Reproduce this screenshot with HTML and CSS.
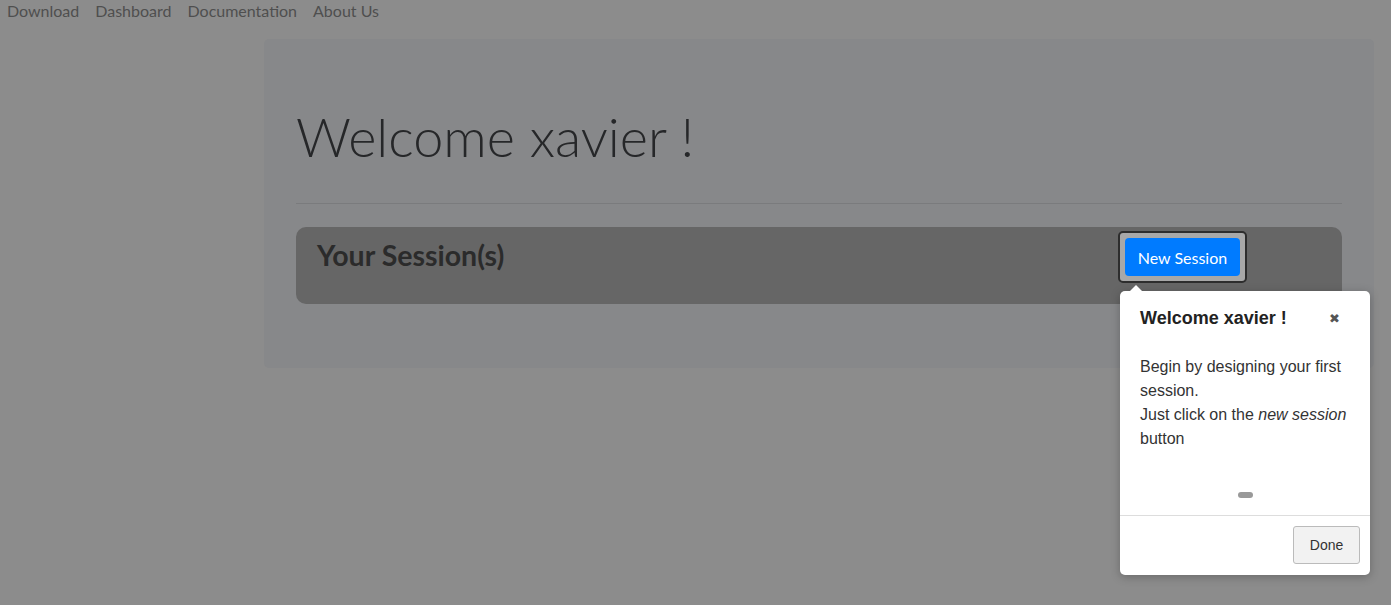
FILE: index.html
```html
<!DOCTYPE html>
<html lang="en">
<head>
<meta charset="utf-8">
<title>Dashboard</title>
<link rel="stylesheet" href="styles.css">
</head>
<body>
<nav class="topnav">
  <a class="nav-link" href="#">Download</a>
  <a class="nav-link" href="#">Dashboard</a>
  <a class="nav-link" href="#">Documentation</a>
  <a class="nav-link" href="#">About Us</a>
</nav>
<main class="container">
  <section class="jumbotron">
    <h1 class="display">Welcome xavier !</h1>
    <hr class="divider">
    <div class="session-card">
      <h3 class="session-title">Your Session(s)</h3>
      <div class="highlight">
        <button class="btn-primary">New Session</button>
      </div>
    </div>
  </section>
</main>
<div class="popover">
  <div class="popover-arrow"></div>
  <div class="popover-header">
    <span class="popover-title">Welcome xavier !</span>
    <span class="popover-close">&#x2716;</span>
  </div>
  <div class="popover-body">
    Begin by designing your first session.<br>
    Just click on the <em>new session</em> button
  </div>
  <div class="popover-dots"><span class="dot"></span></div>
  <div class="popover-footer">
    <button class="btn-done">Done</button>
  </div>
</div>
</body>
</html>
```
FILE: styles.css
```css
html, body {
  margin: 0;
  padding: 0;
}
body {
  background: #8c8c8c;
  font-family: Lato, "Open Sans", sans-serif;
  height: 605px;
  overflow: hidden;
}
.topnav {
  display: flex;
  gap: 16px;
  padding: 0 7px;
  height: 39px;
  align-items: flex-start;
}
.nav-link {
  color: #4f4f4f;
  text-decoration: none;
  font-size: 16px;
  line-height: 22px;
}
.container {
  margin-left: 264px;
  width: 1110px;
}
.jumbotron {
  background: #87888a;
  border-radius: 5px;
  padding: 64px 32px 64px;
}
.display {
  margin: 0;
  font-weight: 300;
  font-size: 54px;
  line-height: 68px;
  color: #262729;
}
.divider {
  margin: 32px 0 23px;
  border: 0;
  border-top: 1px solid #7a7b7d;
}
.session-card {
  background: #666666;
  border-radius: 10px;
  display: flex;
  align-items: flex-start;
  padding: 4px 0 21px 21px;
}
.session-title {
  margin: 7px 0 0;
  font-size: 28.5px;
  font-weight: 700;
  line-height: 34px;
  color: #2b2b2b;
  flex: 0 0 801px;
}
.highlight {
  background: #a8a8a8;
  border: 2px solid #2d2d2d;
  border-radius: 5px;
  padding: 5px;
}
.btn-primary {
  display: block;
  width: 115px;
  height: 38px;
  padding: 0;
  border: 0;
  border-radius: 4px;
  background: #007bff;
  color: #ffffff;
  font-family: Lato, "Open Sans", sans-serif;
  font-size: 16px;
}
.popover {
  position: absolute;
  left: 1120px;
  top: 291px;
  width: 250px;
  height: 284px;
  background: #ffffff;
  border-radius: 5px;
  box-shadow: 0 2px 10px rgba(0,0,0,0.25);
  font-family: "Liberation Sans", Arial, sans-serif;
  color: #333333;
  display: flex;
  flex-direction: column;
}
.popover-arrow {
  position: absolute;
  left: 10px;
  top: -6px;
  width: 0;
  height: 0;
  border-left: 6px solid transparent;
  border-right: 6px solid transparent;
  border-bottom: 6px solid #ffffff;
}
.popover-header {
  display: flex;
  justify-content: space-between;
  align-items: center;
  padding: 15px 30px 0 20px;
  height: 24px;
}
.popover-title {
  font-weight: 700;
  font-size: 18px;
  color: #222222;
}
.popover-close {
  font-size: 13px;
  color: #555555;
}
.popover-body {
  padding: 25px 20px 0;
  font-size: 16px;
  line-height: 24px;
  height: 96px;
}
.popover-dots {
  display: flex;
  justify-content: center;
  margin-top: 41px;
  height: 6px;
}
.dot {
  width: 15px;
  height: 6px;
  border-radius: 3px;
  background: #999999;
}
.popover-footer {
  margin-top: 17px;
  border-top: 1px solid #dddddd;
  display: flex;
  justify-content: flex-end;
  padding: 10px 10px 0;
}
.btn-done {
  width: 67px;
  height: 38px;
  background: #f2f2f2;
  border: 1px solid #bbbbbb;
  border-radius: 3px;
  font-family: "Liberation Sans", Arial, sans-serif;
  font-size: 14px;
  color: #333333;
}
```
